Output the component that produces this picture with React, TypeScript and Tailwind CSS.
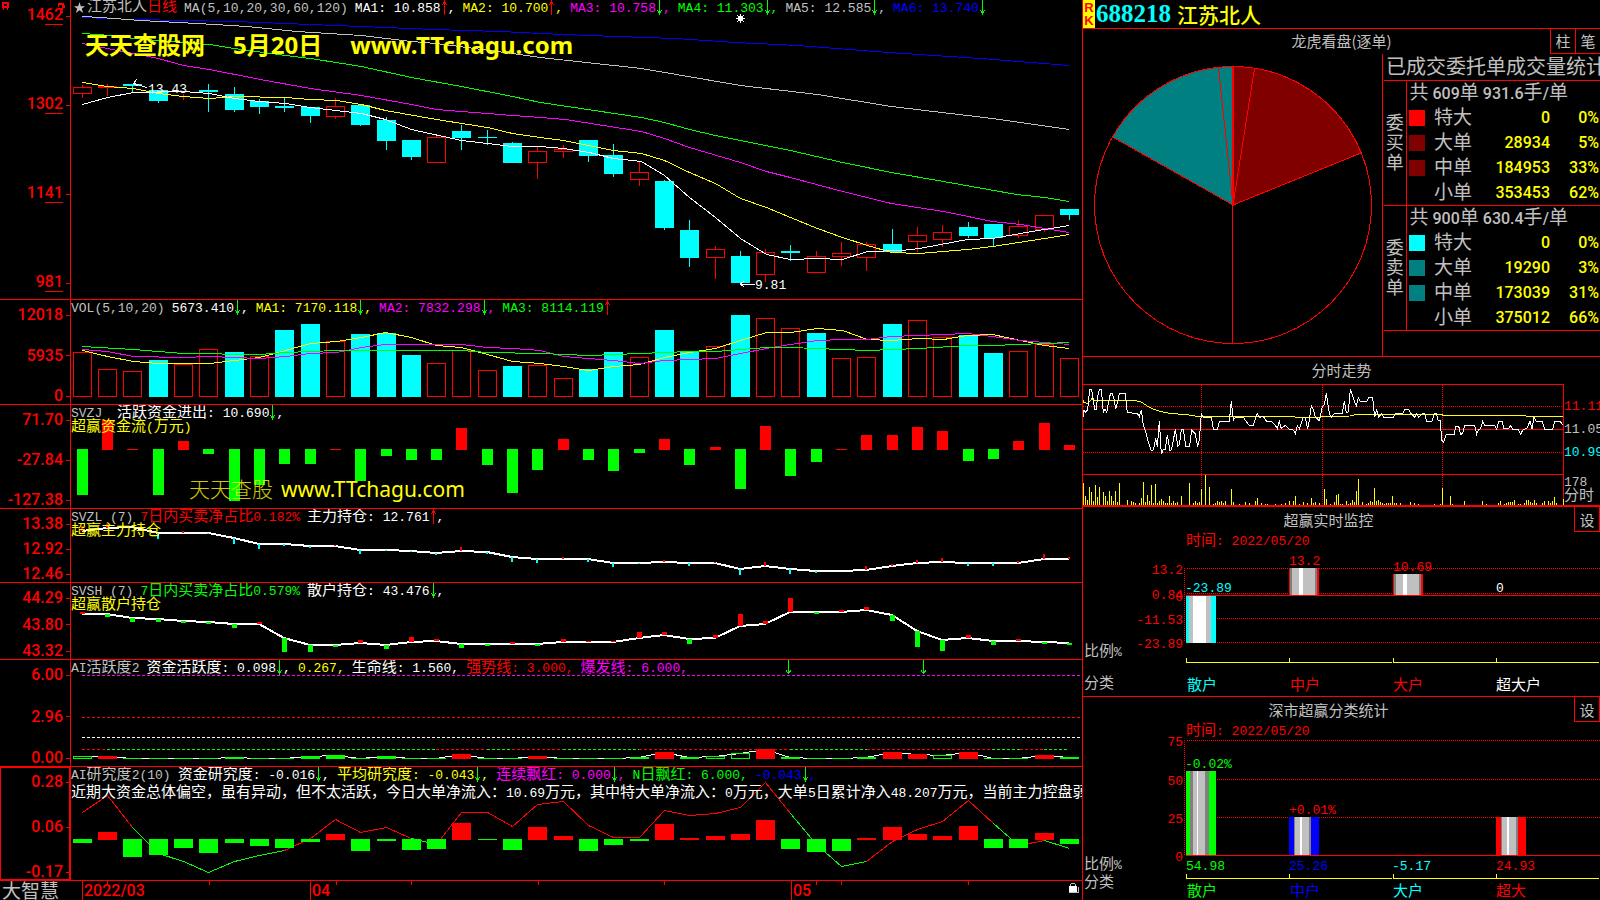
import { Fragment, type ReactNode } from "react";

const MONO = "[font-family:'Liberation_Mono','Noto_Sans_CJK_SC',monospace]";
const AXIS = "[font-family:Roboto,'Noto_Sans_CJK_SC',sans-serif]";

const RED = "#ff0000";
const GREEN = "#00ff00";
const CYAN = "#00ffff";
const YELLOW = "#ffff00";
const MAGENTA = "#ff00ff";
const BLUE = "#0000ff";
const SILVER = "#c0c0c0";
const WHITE = "#ffffff";

const candleX = (i: number) => Math.floor(82.3 + 25.31 * i);

// up, body top, body bottom, high, low
const candles: [number, number, number, number, number][] = [
  [1, 87, 93, 85, 97], [1, 86, 87, 84, 95], [0, 84, 86, 84, 92], [0, 90, 101, 90, 103],
  [1, 99, 99, 94, 99], [0, 90, 92, 84, 112], [0, 94, 110, 87, 112], [0, 101, 107, 99, 114],
  [0, 106, 108, 98, 112], [0, 107, 116, 107, 123], [1, 106, 116, 98, 118], [0, 105, 125, 105, 126],
  [0, 120, 141, 117, 150], [0, 140, 157, 140, 160], [1, 137, 162, 135, 162], [0, 131, 138, 125, 150],
  [0, 137, 138, 130, 145], [0, 143, 163, 142, 163], [1, 151, 162, 147, 178], [1, 149, 151, 145, 157],
  [0, 140, 156, 140, 162], [0, 155, 174, 144, 177], [1, 172, 179, 162, 185], [0, 181, 228, 180, 230],
  [0, 230, 258, 220, 267], [1, 249, 257, 246, 278], [0, 256, 283, 251, 283], [1, 252, 274, 249, 281],
  [0, 251, 253, 245, 261], [1, 256, 272, 251, 272], [1, 253, 256, 242, 265], [1, 244, 257, 242, 270],
  [0, 244, 252, 229, 252], [1, 235, 241, 227, 251], [1, 232, 239, 225, 246], [0, 227, 236, 222, 238],
  [0, 224, 238, 224, 247], [1, 226, 235, 220, 237], [1, 215, 229, 215, 231], [0, 209, 215, 209, 220],
];

const priceLines = [
  { color: BLUE, points: "82,17 133,19 234,21 310,24 361,26 433,29 500,31 540,33 588,35 675,38 735,42 797,45 888,52 980,58 1069,65" },
  { color: SILVER, points: "82,16 100,17 140,20 197,23 247,26 296,31 361,35 411,41 436,43 512,53 540,57 641,68 740,85 817,94 891,106 992,118 1069,129" },
  { color: GREEN, points: "82,33 110,35 133,38 183,42 209,44 234,48 285,55 310,58 361,66 411,77 461,86 512,96 540,102 641,117 664,122 689,129 715,135 790,150 842,162 891,172 943,181 1016,194 1044,197 1069,201" },
  { color: MAGENTA, points: "82,43 107,48 133,53 158,58 183,65 209,69 260,79 310,88 361,95 411,104 436,109 461,111 487,113 512,115 540,117 565,119 641,131 664,138 689,147 740,162 766,171 790,177 842,191 891,203 943,211 992,221 1020,224 1044,228 1069,232" },
  { color: YELLOW, points: "82,82 107,86 133,88 158,93 183,96 209,98 234,96 285,97 310,99 336,100 361,104 385,110 436,119 487,127 512,133 540,137 563,140 613,150 641,153 664,160 689,172 715,183 740,198 766,207 790,217 817,228 842,237 867,245 891,252 919,253 967,249 992,246 1044,238 1069,234" },
  { color: WHITE, points: "82,104 107,97 133,92 183,91 209,93 234,98 259,101 285,103 310,107 361,113 385,119 411,129 461,140 487,143 512,146 540,146 563,148 589,152 613,158 641,161 664,175 689,197 715,217 740,238 766,254 790,259 817,258 842,259 867,251 901,250 919,248 967,239 992,238 1020,233 1044,229 1069,225" },
];

// up, top
const volumes: [number, number][] = [
  [1, 352], [1, 369], [1, 371], [0, 360], [1, 364], [1, 349], [0, 352], [1, 356], [0, 330], [0, 324],
  [1, 341], [0, 334], [0, 333], [0, 355], [1, 363], [1, 350], [1, 370], [0, 366], [1, 365], [1, 378],
  [0, 369], [0, 352], [1, 357], [0, 330], [0, 352], [1, 346], [0, 315], [1, 318], [1, 328], [0, 333],
  [1, 358], [1, 357], [0, 324], [1, 320], [1, 337], [0, 335], [0, 353], [1, 351], [1, 344], [1, 358],
];

const volumeLines = [
  { color: YELLOW, points: "82,350 107,356 133,361 158,363 209,363 234,360 259,357 285,350 310,343 336,341 361,337 385,332 411,337 436,345 461,347 487,354 512,361 540,363 563,366 588,370 613,366 639,364 664,357 689,352 715,348 740,340 766,332 790,332 817,328 842,330 867,339 891,340 919,338 943,339 967,335 992,334 1020,340 1044,345 1069,348" },
  { color: MAGENTA, points: "82,349 107,351 133,356 183,357 209,356 259,358 285,356 310,353 336,352 361,347 385,344 461,344 487,347 512,348 540,350 563,356 613,360 639,363 664,360 689,359 715,358 740,353 766,348 790,344 817,340 842,339 867,339 891,336 943,334 967,333 992,336 1020,340 1069,344" },
  { color: GREEN, points: "82,346 133,349 183,353 259,354 285,352 336,350 461,350 487,352 540,353 589,355 639,353 689,351 715,351 766,347 790,347 867,350 919,348 967,345 992,345 1044,343 1069,342" },
];

// far end of every bar, above or below the zero line at 449
const moneyFlow = [
  495, 420, 448, 495, 441, 454, 501, 485, 464, 464, 448, 481, 456, 460, 460, 428, 465, 493, 470, 439,
  460, 471, 453, 439, 465, 447, 489, 426, 476, 462, 448, 435, 435, 427, 431, 461, 459, 441, 423, 445,
];

const mainHold = [
  531, 528, 527, 533, 533, 533, 538, 544, 544, 546, 546, 550, 550, 551, 553, 551, 552, 557, 559, 559,
  559, 563, 563, 562, 563, 563, 569, 566, 569, 571, 571, 570, 566, 563, 562, 563, 563, 563, 559, 559,
];
const mainTicks = [
  5, 4, 0, -6, 2, -1, -6, -5, -2, -2, 1, -4, -1, -1, -2, 4, -2, -5, -4, 2,
  -3, -4, -1, 2, -3, 1, -6, 4, -5, -2, 0, 4, 2, 3, 4, -3, -3, 2, 5, 2,
];

const retailHold = [
  614, 614, 618, 619, 621, 622, 624, 624, 638, 645, 645, 643, 645, 642, 641, 644, 644, 644, 644, 642,
  642, 642, 638, 635, 639, 638, 626, 624, 612, 612, 612, 610, 615, 631, 640, 638, 641, 641, 642, 643,
];
const retailTicks = [
  2, -3, -4, -3, -2, -2, -4, 2, -14, -7, -2, 3, -4, 5, 2, -4, -2, 2, -2, 3,
  1, 1, 6, 3, -5, 3, 12, 3, 14, -2, 2, 3, -6, -16, -11, 3, -4, 2, -2, -2,
];

// r = red, g = green, h = hollow green
const activity: [string, number][] = [
  ["h", 756], ["r", 756], ["g", 758], ["g", 758], ["g", 758], ["g", 758], ["g", 757], ["g", 758],
  ["g", 758], ["g", 756], ["g", 755], ["g", 758], ["g", 756], ["g", 758], ["g", 758], ["r", 754],
  ["g", 758], ["g", 758], ["r", 756], ["g", 758], ["g", 758], ["g", 758], ["g", 757], ["r", 752],
  ["g", 757], ["h", 756], ["h", 753], ["r", 749], ["g", 757], ["g", 758], ["g", 758], ["g", 757],
  ["r", 752], ["r", 754], ["h", 755], ["r", 752], ["g", 758], ["g", 758], ["r", 755], ["g", 757],
];
const activityDashes: [number, number, string][] = [
  [82, 107, RED], [107, 436, GREEN], [436, 487, RED], [487, 512, GREEN], [512, 563, RED],
  [563, 639, GREEN], [639, 790, RED], [790, 867, GREEN], [867, 992, RED], [992, 1020, GREEN],
  [1020, 1044, RED], [1044, 1069, GREEN],
];

const research = [
  843, 832, 857, 855, 848, 853, 843, 846, 848, 842, 834, 851, 841, 850, 849, 823, 840, 850, 827, 836,
  851, 845, 841, 824, 838, 836, 834, 820, 849, 852, 851, 838, 827, 834, 836, 826, 848, 848, 833, 844,
];
const researchLine = [
  812, 795, 827, 853, 861, 872, 861, 855, 850, 838, 819, 832, 827, 838, 844, 812, 812, 826, 804, 801,
  825, 837, 837, 810, 815, 813, 807, 782, 813, 844, 866, 861, 841, 829, 821, 800, 823, 845, 840, 848,
];
const researchParts: [number, number, string][] = [
  [0, 2, RED], [2, 8, GREEN], [8, 13, RED], [13, 14, GREEN], [14, 28, RED],
  [28, 31, GREEN], [31, 36, RED], [36, 37, GREEN], [37, 38, RED], [38, 39, GREEN],
];

const intradayPrice =
  "9,202 12,180 17,188 23,178 29,118 35,118 40,150 44,178 48,180 53,140 58,120 64,118 70,188 75,178 80,188 85,160 91,132 97,130 103,150 107,178 114,150 118,130 136,130 142,188 172,190 178,200 184,180 190,225 198,250 206,280 214,302 220,300 227,265 232,290 238,214 244,312 250,298 256,298 262,254 270,302 275,298 286,238 293,288 298,285 304,240 310,238 317,288 329,288 335,240 345,250 353,290 358,270 364,190 370,202 394,202 400,237 412,238 418,214 448,214 454,154 460,210 466,202 490,202 498,214 508,226 520,226 532,190 538,202 550,200 560,214 574,214 586,226 592,236 598,214 604,236 616,226 628,238 640,240 646,252 652,228 658,236 670,202 676,204 683,236 688,210 694,166 700,178 706,202 718,212 727,170 733,164 739,130 748,190 754,202 763,190 787,190 793,154 799,188 805,186 811,118 817,134 823,154 829,166 835,142 841,154 860,154 866,142 878,143 884,202 890,180 896,202 905,190 911,202 940,202 946,190 968,190 974,178 986,178 992,190 1004,202 1010,190 1016,202 1028,190 1034,192 1040,214 1056,214 1064,190 1070,192 1074,210 1081,212 1085,270 1091,276 1098,254 1122,254 1128,228 1136,228 1142,254 1148,250 1154,226 1184,226 1190,252 1196,238 1202,236 1208,214 1214,226 1244,226 1250,238 1256,214 1266,214 1272,236 1286,236 1292,226 1298,238 1314,238 1322,252 1330,238 1340,236 1350,214 1356,236 1362,202 1368,214 1386,214 1394,238 1418,238 1424,214 1440,214 1448,224";
const intradayAverage =
  "9,150 12,158 24,160 36,146 42,150 160,150 184,156 202,168 220,178 240,184 270,190 320,194 350,199 640,199 646,202 720,202 727,199 811,198 830,193 1085,193 1088,196 1336,196 1340,199 1448,199";
const intradayVolume =
  "10:400 16:438 22:450 28:411 34:426 40:452 46:405 52:441 58:411 70:426 76:438 82:452 88:423 94:438 100:452 106:423 112:456 118:400 142:450 154:453 160:456 166:459 178:459 184:444 190:396 196:456 202:435 208:453 214:405 220:459 226:402 232:459 238:453 244:447 250:453 256:459 262:459 268:438 274:459 280:453 286:459 292:456 304:438 328:400 340:459 346:453 352:459 358:456 364:417 376:375 388:411 400:462 406:459 412:453 418:456 424:453 430:459 436:453 454:417 460:456 478:462 496:456 508:459 526:453 532:444 544:459 556:462 562:462 586:462 604:462 616:459 628:453 640:453 646:438 658:462 670:456 682:459 694:444 700:459 706:456 718:459 733:417 739:447 751:462 763:456 769:435 775:432 781:462 787:462 799:453 805:462 811:459 817:450 823:456 829:423 835:387 847:456 859:462 865:459 871:453 877:456 883:414 889:453 895:450 901:456 907:459 913:462 919:459 925:459 931:459 937:438 943:459 949:459 961:459 991:456 1003:459 1015:462 1063:462 1081:462 1087:414 1111:438 1117:462 1153:453 1207:453 1219:462 1255:459 1261:453 1273:462 1279:459 1285:456 1291:456 1297:456 1303:450 1315:462 1321:462 1333:459 1339:450 1345:450 1351:456 1357:459 1363:450 1369:459 1387:459 1393:453 1405:453 1411:459 1417:453 1423:441 1429:459 1449:447"
    .split(" ")
    .map((pair) => pair.split(":").map(Number));

// CJK glyphs are drawn a size larger than the half-width ones
function Mixed({ text }: { text: string }) {
  return (
    <>
      {text.split(/([^\x00-\x7f]+)/).map((part, i) => (
        <span key={i} className={i % 2 ? "text-[15px]" : "text-[13px]"}>
          {part}
        </span>
      ))}
    </>
  );
}

function Arrow({ up }: { up?: boolean }) {
  return (
    <svg
      className="inline-block h-[15px] w-[7px] align-top"
      viewBox="0 0 7 15"
      shapeRendering="crispEdges"
      fill={up ? RED : GREEN}
    >
      <rect x="3" y="0" width="1" height="15" />
      {up ? <path d="M2 2h3v2H2zM1 4h1v1H1zM5 4h1v1H5z" /> : <path d="M2 11h3v2H2zM1 10h1v1H1zM5 10h1v1H5z" />}
    </svg>
  );
}

type LegendItem = { text: string; color: string; arrow?: "up" | "down"; end?: string };

function Legend({ items }: { items: LegendItem[] }) {
  return (
    <div className="flex h-[15px] gap-[7px] leading-[17px]">
      {items.map((item) => (
        <span key={item.text + item.color} className="whitespace-pre" style={{ color: item.color }}>
          <Mixed text={item.text} />
          {item.arrow && <Arrow up={item.arrow === "up"} />}
          {item.end && <Mixed text={item.end} />}
        </span>
      ))}
    </div>
  );
}

type PanelProps = {
  ticks: string[];
  top: number;
  height: number;
  legend: ReactNode;
  children: ReactNode;
  axisClass?: string;
  underline?: boolean;
};

function Panel({ ticks, top, height, legend, children, axisClass = "pt-[7px]", underline }: PanelProps) {
  return (
    <section className="flex min-h-0 min-w-0 border-b border-[#ff0000]">
      <div
        className={`flex w-[71px] shrink-0 flex-col justify-between border-r border-[#ff0000] text-base leading-4 font-medium text-[#ff0000] ${AXIS} ${axisClass}`}
      >
        {ticks.map((tick) => (
          <div key={tick} className="flex h-4 items-center justify-end gap-[3px]">
            {underline ? (
              <span>
                {tick.slice(0, -2)}
                <span className="inline-block h-[18px] border-b border-[#ff0000] align-top">{tick.slice(-2)}</span>
              </span>
            ) : (
              <span>{tick}</span>
            )}
            <span className="h-px w-1 bg-[#ff0000]" />
          </div>
        ))}
      </div>
      <div className={`relative min-w-0 flex-1 overflow-hidden ${MONO}`}>
        <svg
          className="absolute inset-0 h-full w-full"
          viewBox={`71 ${top} 1011 ${height}`}
          preserveAspectRatio="none"
          shapeRendering="crispEdges"
          fill="none"
        >
          {children}
        </svg>
        <div className="relative whitespace-nowrap">{legend}</div>
      </div>
    </section>
  );
}

function Lines({ lines }: { lines: { color: string; points: string }[] }) {
  return (
    <g transform="translate(0.5 0.5)">
      {lines.map((line) => (
        <polyline key={line.color} points={line.points} stroke={line.color} />
      ))}
    </g>
  );
}

function PricePanel() {
  return (
    <Panel
      ticks={["1462", "1302", "1141", "981"]}
      top={0}
      height={299}
      underline
      axisClass="py-2"
      legend={
        <>
          <div className="flex gap-[7px] pl-[3px]">
            <h1 className="flex h-[15px] items-center text-[15px] leading-[17px] text-[#c0c0c0]">
              <svg className="mr-[2px] h-[11px] w-[11px]" viewBox="0 0 24 24" fill={SILVER}>
                <path d="M12 0l3 9h9l-7 5.500 3 9.500-8-6-8 6 3-9.500L0 9h9z" />
              </svg>
              江苏北人<span className="text-[#ff0000]">日线</span>
            </h1>
            <Legend
              items={[
                { text: "MA(5,10,20,30,60,120)", color: SILVER },
                { text: "MA1: 10.858", color: WHITE, arrow: "up", end: "," },
                { text: "MA2: 10.700", color: YELLOW, arrow: "up", end: "," },
                { text: "MA3: 10.758", color: MAGENTA, arrow: "down", end: "," },
                { text: "MA4: 11.303", color: GREEN, arrow: "down", end: "," },
                { text: "MA5: 12.585", color: SILVER, arrow: "down", end: "," },
                { text: "MA6: 13.740", color: BLUE, arrow: "down" },
              ]}
            />
          </div>
          <p className="flex gap-7 pt-[14px] pl-[14px] text-2xl leading-8 font-bold text-[#ffff00] [font-family:'Noto_Sans','Noto_Sans_CJK_SC',sans-serif]">
            <span>天天查股网</span>
            <span>5月20日</span>
            <span>www.TTchagu.com</span>
          </p>
        </>
      }
    >
      {candles.map(([up, top, bottom, high, low], i) => {
        const x = candleX(i);
        return up ? (
          <g key={i} fill={RED}>
            <rect x={x} y={high} width="1" height={top - high} />
            <rect x={x} y={bottom} width="1" height={low - bottom + 1} />
            <rect x={x - 8.5} y={top + 0.5} width="18" height={bottom - top} stroke={RED} fill="none" />
          </g>
        ) : (
          <g key={i} fill={CYAN}>
            <rect x={x} y={high} width="1" height={low - high} />
            <rect x={x - 9} y={top} width="19" height={bottom - top} />
          </g>
        );
      })}
      <Lines lines={priceLines} />
      <path d="M136.500 79.500l-3 4 5 3M134 83.500l13 4" stroke={WHITE} />
      <path d="M744.500 280.500l-4 3.500 4 3.500M740 284h15" stroke={WHITE} />
      <g fill={WHITE} className={MONO} fontSize="13">
        <text x="148" y="93">13.43</text>
        <text x="755" y="289">9.81</text>
      </g>
      <path d="M738 16h5v5h-5zM740 14h1v9h-1zM736 18h9v1h-9zM737 15h1v1h-1zM743 15h1v1h-1zM737 21h1v1h-1zM743 21h1v1h-1z" fill={WHITE} />
    </Panel>
  );
}

function VolumePanel() {
  return (
    <Panel
      ticks={["12018", "5935", "0"]}
      top={300}
      height={104}
      legend={
        <Legend
          items={[
            { text: "VOL(5,10,20)", color: SILVER },
            { text: "5673.410", color: WHITE, arrow: "down", end: "," },
            { text: "MA1: 7170.118", color: YELLOW, arrow: "down", end: "," },
            { text: "MA2: 7832.298", color: MAGENTA, arrow: "down", end: "," },
            { text: "MA3: 8114.119", color: GREEN, arrow: "up" },
          ]}
        />
      }
    >
      {volumes.map(([up, top], i) =>
        up ? (
          <rect key={i} x={candleX(i) - 8.5} y={top + 0.5} width="18" height={396 - top} stroke={RED} />
        ) : (
          <rect key={i} x={candleX(i) - 9} y={top} width="19" height={397 - top} fill={CYAN} />
        )
      )}
      <Lines lines={volumeLines} />
    </Panel>
  );
}

function FlowPanel() {
  return (
    <Panel
      ticks={["71.70", "-27.84", "-127.38"]}
      top={405}
      height={103}
      legend={
        <>
          <Legend
            items={[
              { text: "SVZJ", color: SILVER },
              { text: " 活跃资金进出: 10.690", color: WHITE, arrow: "down", end: "," },
            ]}
          />
          <p className="leading-[15px] text-[#ffff00]">
            <Mixed text="超赢资金流(万元)" />
          </p>
          <p className="flex items-center gap-2 pt-[40px] pl-[118px] text-[21px] leading-7 text-[#ffff00] [font-family:'Noto_Sans','Noto_Sans_CJK_SC',sans-serif]">
            <span className="font-light opacity-80">天天查股</span>
            <span>www.TTchagu.com</span>
          </p>
        </>
      }
    >
      {moneyFlow.map((y, i) =>
        y < 449 ? (
          <rect key={i} x={candleX(i) - 5} y={y === 448 ? 449 : y} width="11" height={y === 448 ? 1 : 450 - y} fill={RED} />
        ) : (
          <rect key={i} x={candleX(i) - 5} y="449" width="11" height={y - 449} fill={GREEN} />
        )
      )}
    </Panel>
  );
}

type HoldProps = { values: number[]; ticks: number[]; width: number; down: string };

function HoldLine({ values, ticks, width, down }: HoldProps) {
  return (
    <>
      <polyline points={values.map((y, i) => `${candleX(i)},${y}`).join(" ")} stroke={WHITE} strokeWidth="2" />
      {ticks.map((len, i) => (
        <rect
          key={i}
          x={candleX(i) - Math.floor(width / 2)}
          y={len > 0 ? values[i] - len : values[i]}
          width={width}
          height={Math.abs(len)}
          fill={len > 0 ? RED : down}
        />
      ))}
    </>
  );
}

function HoldPanels() {
  return (
    <>
      <Panel
        ticks={["13.38", "12.92", "12.46"]}
        top={509}
        height={73}
        legend={
          <>
            <Legend
              items={[
                { text: "SVZL (7)", color: SILVER },
                { text: "7日内买卖净占比0.182%", color: RED },
                { text: "主力持仓: 12.761", color: WHITE, arrow: "up", end: "," },
              ]}
            />
            <p className="text-[15px] leading-[15px] text-[#ffff00]">超赢主力持仓</p>
          </>
        }
      >
        <HoldLine values={mainHold} ticks={mainTicks} width={2} down={CYAN} />
      </Panel>
      <Panel
        ticks={["44.29", "43.80", "43.32"]}
        top={583}
        height={76}
        legend={
          <>
            <Legend
              items={[
                { text: "SVSH (7)", color: SILVER },
                { text: "7日内买卖净占比0.579%", color: GREEN },
                { text: "散户持仓: 43.476", color: WHITE, arrow: "down", end: "," },
              ]}
            />
            <p className="text-[15px] leading-[15px] text-[#ffff00]">超赢散户持仓</p>
          </>
        }
      >
        <HoldLine values={retailHold} ticks={retailTicks} width={5} down={GREEN} />
      </Panel>
    </>
  );
}

function ActivityPanel() {
  return (
    <Panel
      ticks={["6.00", "2.96", "0.00"]}
      top={660}
      height={106}
      legend={
        <Legend
          items={[
            { text: "AI活跃度2", color: SILVER },
            { text: "资金活跃度: 0.098", color: WHITE, arrow: "down", end: "," },
            { text: "0.267,", color: YELLOW },
            { text: "生命线: 1.560,", color: WHITE },
            { text: "强势线: 3.000,", color: RED },
            { text: "爆发线: 6.000,", color: MAGENTA },
          ]}
        />
      }
    >
      <g strokeDasharray="3 2">
        <path d="M82 675.500H1081" stroke={MAGENTA} />
        <path d="M82 717.500H1081" stroke={RED} />
        <path d="M82 737.500H1081" stroke={WHITE} />
        {activityDashes.map(([from, to, color]) => (
          <path key={from} d={`M${from} 749.500H${to}`} stroke={color} />
        ))}
      </g>
      <polyline points={activity.map(([, y], i) => `${candleX(i)},${y + 0.5}`).join(" ")} stroke={WHITE} />
      {activity.map(([kind, y], i) =>
        kind === "h" ? (
          <rect key={i} x={candleX(i) - 8.5} y={y + 0.5} width="18" height={758 - y} stroke={GREEN} />
        ) : (
          <rect key={i} x={candleX(i) - 9} y={y} width="19" height={759 - y} fill={kind === "r" ? RED : GREEN} />
        )
      )}
      <path d="M788.500 660v14M786 670.500l2.500 3 2.500-3M923.500 660v14M921 670.500l2.500 3 2.500-3" stroke={GREEN} />
    </Panel>
  );
}

function ResearchPanel() {
  return (
    <Panel
      ticks={["0.28", "0.06", "-0.17"]}
      top={767}
      height={113}
      axisClass="pt-[7px] shadow-[inset_1px_1px_0_#ff0000,inset_-1px_-1px_0_#ff0000]"
      legend={
        <>
          <Legend
            items={[
              { text: "AI研究度2(10)", color: SILVER },
              { text: "资金研究度: -0.016", color: WHITE, arrow: "down", end: "," },
              { text: "平均研究度: -0.043", color: YELLOW, arrow: "down", end: "," },
              { text: "连续飘红: 0.000", color: MAGENTA, arrow: "down", end: "," },
              { text: "N日飘红: 6.000,", color: GREEN },
              { text: "-0.043", color: BLUE, arrow: "down", end: "," },
            ]}
          />
          <p className="pt-1 leading-[15px] text-white">
            <Mixed text="近期大资金总体偏空，虽有异动，但不太活跃，今日大单净流入：10.69万元，其中特大单净流入：0万元，大单5日累计净入48.207万元，当前主力控盘弱" />
          </p>
        </>
      }
    >
      {researchParts.map(([from, to, color]) => (
        <polyline
          key={from}
          points={researchLine
            .slice(from, to + 1)
            .map((y, i) => `${candleX(from + i) + 0.5},${y + 0.5}`)
            .join(" ")}
          stroke={color}
        />
      ))}
      {research.map((y, i) =>
        y < 839 ? (
          <rect key={i} x={candleX(i) - 9} y={y} width="19" height={840 - y} fill={RED} />
        ) : (
          <rect key={i} x={candleX(i) - 9} y="839" width="19" height={y - 839} fill={GREEN} />
        )
      )}
    </Panel>
  );
}

function TimeAxis() {
  return (
    <footer className="flex min-h-0">
      <div className="w-[71px] shrink-0 pl-[2px] text-[19px] leading-[18px] whitespace-nowrap text-[#c0c0c0] [font-family:'Noto_Sans_CJK_SC',sans-serif]">
        大智慧
      </div>
      <svg className="h-full min-w-0 flex-1" viewBox="71 881 1011 19" preserveAspectRatio="none" shapeRendering="crispEdges">
        <path d="M82.500 881v19M310.500 881v19M791.500 881v19" stroke={RED} />
        <path d="M107.500 881v4M209.500 881v4M336.500 881v4M411.500 881v4M538.500 881v4M664.500 881v4M816.500 881v4M841.500 881v4M968.500 881v4" stroke={RED} />
        <g fill={RED} className={AXIS} fontSize="16" fontWeight="500">
          <text x="84" y="896">2022/03</text>
          <text x="312" y="896">04</text>
          <text x="793" y="896">05</text>
        </g>
        <path d="M1071 883h4v1h-4zM1070 884h1v2h-1zM1075 884h1v2h-1z" fill={SILVER} />
        <path d="M1069 886h8v6h-8z" fill={WHITE} />
        <path d="M1078 887h1v6h-10v-1h9z" fill={SILVER} />
      </svg>
    </footer>
  );
}

function StockHeader() {
  return (
    <header className="flex min-h-0 items-center border-b border-[#ff0000]">
      <div className="flex h-full w-3 flex-col items-center justify-center bg-[#ffff00] text-[13px] leading-[13px] font-bold text-[#ff0000] [font-family:'Liberation_Sans',sans-serif]">
        <span>R</span>
        <span>K</span>
      </div>
      <span className="pl-px text-[25px] leading-7 font-bold text-[#00ffff] [font-family:'Liberation_Serif',serif]">688218</span>
      <h2 className="pl-[6px] text-[21px] leading-7 font-medium text-[#ffff00] [font-family:'Noto_Sans_CJK_SC',sans-serif]">江苏北人</h2>
    </header>
  );
}

const sides = [
  {
    name: "委买单",
    count: "609",
    average: "931.6",
    rows: [
      { label: "特大", swatch: "bg-[#ff0000]", amount: "0", share: "0%" },
      { label: "大单", swatch: "bg-[#800000]", amount: "28934", share: "5%" },
      { label: "中单", swatch: "bg-[#800000]", amount: "184953", share: "33%" },
      { label: "小单", swatch: "", amount: "353453", share: "62%" },
    ],
  },
  {
    name: "委卖单",
    count: "900",
    average: "630.4",
    rows: [
      { label: "特大", swatch: "bg-[#00ffff]", amount: "0", share: "0%" },
      { label: "大单", swatch: "bg-[#008080]", amount: "19290", share: "3%" },
      { label: "中单", swatch: "bg-[#008080]", amount: "173039", share: "31%" },
      { label: "小单", swatch: "", amount: "375012", share: "66%" },
    ],
  },
];

function OrderTable() {
  return (
    <table className={`w-full table-fixed border-collapse text-base leading-5 font-medium ${AXIS}`}>
      <colgroup>
        <col className="w-[22px]" />
        <col className="w-7" />
        <col className="w-11" />
        <col />
        <col className="w-[50px]" />
      </colgroup>
      {sides.map((side) => (
        <tbody key={side.name} className="border-y border-[#ff0000] text-[#ffff00]">
          <tr className="h-[25px] text-[#c0c0c0]">
            <th rowSpan={5} className="border-r border-[#ff0000] p-0 text-[18px] font-normal break-all">
              {side.name}
            </th>
            <td colSpan={4} className="p-0 pl-[3px] whitespace-nowrap">
              <span className="text-[19px] font-normal">共</span> {side.count}
              <span className="text-[19px] font-normal">单</span> {side.average}
              <span className="text-[19px] font-normal">手</span>/<span className="text-[19px] font-normal">单</span>
            </td>
          </tr>
          {side.rows.map((row) => (
            <tr key={row.label} className="h-[25px]">
              <td className="p-0 pl-[2px]">
                <div className={`h-4 w-4 ${row.swatch}`} />
              </td>
              <td className="p-0 text-[19px] font-normal whitespace-nowrap text-[#c0c0c0]">{row.label}</td>
              <td className="p-0 text-right">{row.amount}</td>
              <td className="p-0 pr-px text-right">{row.share}</td>
            </tr>
          ))}
        </tbody>
      ))}
    </table>
  );
}

function OrderSection() {
  return (
    <section className="flex min-h-0 flex-col border-b border-[#ff0000] [font-family:'Noto_Sans_CJK_SC',sans-serif]">
      <div className="grid h-[25px] grid-cols-[50px_1fr_50px] text-[15px] leading-6 text-[#c0c0c0]">
        <h3 className="col-start-2 text-center">龙虎看盘(逐单)</h3>
        <div className="flex border-b border-[#ff0000]">
          <button className="flex-1 border-l border-[#ff0000]">柱</button>
          <button className="flex-1 border-l border-[#ff0000]">笔</button>
        </div>
      </div>
      <div className="flex min-h-0 flex-1">
        <svg className="h-full min-w-0 flex-1" viewBox="1083 54 299 302" shapeRendering="crispEdges" stroke={RED}>
          <path d="M1233 205V66.500A138.500 138.500 0 0 1 1361 153z" fill="#800000" />
          <path d="M1233 205L1112.500 137A138.500 138.500 0 0 1 1233 66.500z" fill="#008080" />
          <path d="M1233 205L1254.500 68.500M1233 205L1218.500 67.500M1232.500 66v277" />
          <circle cx="1233" cy="205" r="138.500" fill="none" />
        </svg>
        <div className="w-[218px] shrink-0 overflow-hidden border-l border-[#ff0000] pl-px">
          <h4 className="h-[26px] pl-[2px] text-xl leading-6 whitespace-nowrap text-[#c0c0c0]">已成交委托单成交量统计</h4>
          <OrderTable />
        </div>
      </div>
    </section>
  );
}

function IntradaySection() {
  return (
    <section className="flex min-h-0 flex-col border-b-2 border-[#ff0000]">
      <h3 className="h-[27px] text-center text-[15px] leading-[25px] text-[#c0c0c0] [font-family:'Noto_Sans_CJK_SC',sans-serif]">
        分时走势
      </h3>
      <div className="flex min-h-0 flex-1">
        <svg className="h-full min-w-0 flex-1" viewBox="9 102 1443 363" preserveAspectRatio="none" shapeRendering="crispEdges" fill="none" strokeWidth="3">
          <g stroke={RED}>
            <path d="M9 103.500H1450.500V465M9 238.500H1450M9 373.500H1450" />
            <path d="M9 169.500H1450M9 307.500H1450M364.500 105V465M727.500 105V465M1087.500 105V465" strokeDasharray="3 3" />
          </g>
          <polyline points={intradayAverage} stroke={YELLOW} />
          <polyline points={intradayPrice} stroke={WHITE} />
          {intradayVolume.map(([x, y]) => (
            <path key={x} d={`M${x + 0.5} ${y}V465`} stroke={YELLOW} />
          ))}
        </svg>
        <div className={`flex w-9 shrink-0 flex-col overflow-hidden pt-[15px] text-[13px] leading-4 text-[#c0c0c0] ${MONO}`}>
          <span className="text-[#ff0000]">11.11</span>
          <span className="pt-[7px]">11.05</span>
          <span className="pt-[7px] text-[#00ffff]">10.99</span>
          <span className="pt-[14px]">178</span>
          <span className="text-[15px] leading-3">分时</span>
        </div>
      </div>
    </section>
  );
}

type Bar = { x: number; top: number; bottom: number; stripes: [number, string][] };
type Note = { x: number; y: number; text: string; color: string };
type StatChartProps = {
  title: string;
  top: number;
  height: number;
  scale: [string, number][];
  dotted: number[];
  base: number;
  axisY: number;
  bars: Bar[];
  notes: Note[];
};

const GREY = "#808080";
const thinStripes = (c: string): [number, string][] => [[1, c], [2, GREY], [7, SILVER], [4, WHITE], [12, SILVER], [2, GREY], [2, c]];
const wideStripes = (c: string): [number, string][] => [[5, c], [1, GREY], [5, SILVER], [2, WHITE], [7, SILVER], [2, GREY], [8, c]];

function StatChart({ title, top, height, scale, dotted, base, axisY, bars, notes }: StatChartProps) {
  const first = dotted[0];
  const last = Math.max(base, dotted[dotted.length - 1]);
  return (
    <>
      <div className="flex h-[25px] text-[15px] leading-[25px] text-[#c0c0c0] [font-family:'Noto_Sans_CJK_SC',sans-serif]">
        <h3 className="flex-1 text-center">{title}</h3>
        <button className="w-[26px] border border-t-0 border-[#ff0000]">设</button>
      </div>
      <svg className="min-h-0 w-full flex-1" viewBox={`1083 ${top} 517 ${height}`} shapeRendering="crispEdges">
        <g stroke={RED} strokeDasharray="1 1">
          {dotted.map((y) => (
            <path key={y} d={`M1187 ${y + 0.5}H1600`} />
          ))}
          <path d={`M1184.500 ${first}V${last}`} />
        </g>
        <path d={`M1186 ${base + 0.5}H1600`} stroke={RED} />
        {bars.map((bar) => {
          let x = bar.x;
          return (
            <g key={bar.x}>
              {bar.stripes.map(([width, color], i) => {
                const left = x;
                x += width;
                return <rect key={i} x={left} y={bar.top} width={width} height={bar.bottom - bar.top} fill={color} />;
              })}
            </g>
          );
        })}
        <path
          d={`M1186.500 ${axisY - 4}V${axisY + 0.5}H1392M1289.500 ${axisY - 4}v4M1393.500 ${axisY - 4}V${axisY + 0.5}H1599M1496.500 ${axisY - 4}v4`}
          stroke={YELLOW}
          fill="none"
        />
        <g className={MONO}>
          {scale.map(([text, y]) => (
            <text key={text} x="1183" y={y + 5} textAnchor="end" fontSize="13" fill={RED}>
              {text}
            </text>
          ))}
          {notes.map((note) => (
            <text key={note.text + note.x + note.y} x={note.x} y={note.y + 5} fill={note.color}>
              {note.text.split(/([^\x00-\x7f]+)/).map((part, i) => (
                <Fragment key={i}>{part && <tspan fontSize={i % 2 ? 15 : 13}>{part}</tspan>}</Fragment>
              ))}
            </text>
          ))}
        </g>
      </svg>
    </>
  );
}

function MonitorSection() {
  return (
    <section className="flex min-h-0 flex-col border-b border-[#ff0000]">
      <StatChart
        title="超赢实时监控"
        top={532}
        height={164}
        scale={[["13.2", 569], ["0.84", 594], ["0", 596], ["-11.53", 619], ["-23.89", 643]]}
        dotted={[568, 593, 618, 642]}
        base={595}
        axisY={662}
        bars={[
          { x: 1186, top: 596, bottom: 643, stripes: [[3, CYAN], [4, SILVER], [13, WHITE], [5, SILVER], [5, CYAN]] },
          { x: 1289, top: 568, bottom: 595, stripes: thinStripes(RED) },
          { x: 1393, top: 574, bottom: 595, stripes: thinStripes(RED) },
        ]}
        notes={[
          { x: 1186, y: 540, text: "时间: 2022/05/20", color: RED },
          { x: 1185, y: 587, text: "-23.89", color: CYAN },
          { x: 1289, y: 560, text: "13.2", color: RED },
          { x: 1393, y: 566, text: "10.69", color: RED },
          { x: 1496, y: 587, text: "0", color: WHITE },
          { x: 1084, y: 651, text: "比例%", color: SILVER },
          { x: 1084, y: 683, text: "分类", color: SILVER },
          { x: 1187, y: 685, text: "散户", color: CYAN },
          { x: 1290, y: 685, text: "中户", color: RED },
          { x: 1393, y: 685, text: "大户", color: RED },
          { x: 1496, y: 685, text: "超大户", color: WHITE },
        ]}
      />
    </section>
  );
}

function ClassSection() {
  return (
    <section className="flex min-h-0 flex-col">
      <StatChart
        title="深市超赢分类统计"
        top={722}
        height={178}
        scale={[["75", 741], ["50", 780], ["25", 818], ["0", 856]]}
        dotted={[740, 779, 817]}
        base={855}
        axisY={878}
        bars={[
          {
            x: 1186,
            top: 771,
            bottom: 855,
            stripes: [[4, GREEN], [3, GREY], [4, SILVER], [1, WHITE], [7, SILVER], [4, GREY], [7, GREEN]],
          },
          { x: 1289, top: 817, bottom: 855, stripes: wideStripes(BLUE) },
          { x: 1496, top: 817, bottom: 855, stripes: wideStripes(RED) },
        ]}
        notes={[
          { x: 1186, y: 730, text: "时间: 2022/05/20", color: RED },
          { x: 1185, y: 763, text: "-0.02%", color: GREEN },
          { x: 1289, y: 809, text: "+0.01%", color: RED },
          { x: 1186, y: 865, text: "54.98", color: GREEN },
          { x: 1289, y: 865, text: "25.26", color: BLUE },
          { x: 1392, y: 865, text: "-5.17", color: CYAN },
          { x: 1496, y: 865, text: "24.93", color: RED },
          { x: 1084, y: 864, text: "比例%", color: SILVER },
          { x: 1084, y: 882, text: "分类", color: SILVER },
          { x: 1187, y: 891, text: "散户", color: GREEN },
          { x: 1290, y: 891, text: "中户", color: BLUE },
          { x: 1393, y: 891, text: "大户", color: CYAN },
          { x: 1496, y: 891, text: "超大", color: RED },
        ]}
      />
    </section>
  );
}

export default function App() {
  return (
    <div className="grid h-screen grid-cols-[minmax(0,1082fr)_minmax(0,518fr)] grid-rows-[minmax(0,1fr)] overflow-hidden bg-black">
      <main className="relative grid grid-cols-[minmax(0,1fr)] grid-rows-[minmax(0,300fr)_minmax(0,105fr)_minmax(0,104fr)_minmax(0,74fr)_minmax(0,77fr)_minmax(0,107fr)_minmax(0,114fr)_minmax(0,19fr)]">
        <svg className="absolute top-0 left-0 h-4 w-[70px]" viewBox="0 0 70 16" shapeRendering="crispEdges">
          <path d="M2 2h7v6H2zM4 4v2h3V4z" fill={RED} fillRule="evenodd" />
          <path d="M3 8h1v2H3zM7 8h1v2H7z" fill={RED} />
          <path d="M58 3h6v2h1v3h-2v2h-3V8h2V5h-3v2h-1zM60 11h3v2h-3z" fill={RED} />
        </svg>
        <PricePanel />
        <VolumePanel />
        <FlowPanel />
        <HoldPanels />
        <ActivityPanel />
        <ResearchPanel />
        <TimeAxis />
      </main>
      <aside className="grid grid-cols-[minmax(0,1fr)] grid-rows-[minmax(0,29fr)_minmax(0,328fr)_minmax(0,150fr)_minmax(0,190fr)_minmax(0,203fr)] border-l border-[#ff0000]">
        <StockHeader />
        <OrderSection />
        <IntradaySection />
        <MonitorSection />
        <ClassSection />
      </aside>
    </div>
  );
}
